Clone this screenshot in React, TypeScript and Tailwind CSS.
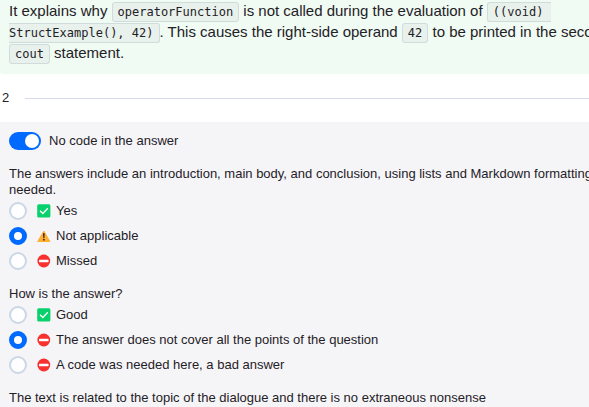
import type { ReactNode } from 'react'

type Mark = 'yes' | 'warning' | 'no'

interface Option {
  label: string
  mark: Mark
}

interface QuestionProps {
  name: string
  title: ReactNode
  options: Option[]
  selected: number
}

function MarkIcon({ mark }: { mark: Mark }) {
  if (mark === 'yes') {
    return (
      <svg width="14" height="14" viewBox="0 0 14 14" className="shrink-0" aria-hidden="true">
        <rect x="0.2" y="0.3" width="13.2" height="13.2" rx="1.5" fill="#08d16c" />
        <path d="M3 6.8 5.8 9.5 10.8 4.2" fill="none" stroke="#fff" strokeWidth="1.3" />
      </svg>
    )
  }
  if (mark === 'warning') {
    return (
      <svg width="14" height="14" viewBox="0 0 14 14" className="shrink-0" aria-hidden="true">
        <path d="M6.8 2 12.9 12.5H.7Z" fill="#ffb02e" stroke="#ffb02e" strokeWidth="1" strokeLinejoin="round" />
        <path d="M6 4.2h1.7l-.3 4.7H6.3Z" fill="#321b41" />
        <circle cx="6.85" cy="10.7" r="0.9" fill="#321b41" />
      </svg>
    )
  }
  return (
    <svg width="14" height="14" viewBox="0 0 14 14" className="shrink-0" aria-hidden="true">
      <circle cx="6.8" cy="7" r="6.4" fill="#f8312f" />
      <rect x="2" y="5.8" width="9.6" height="2.4" rx="0.6" fill="#fff" />
    </svg>
  )
}

function Code({ children }: { children: ReactNode }) {
  return (
    <code className="rounded-[3px] border border-[#cfdcdb] bg-[#e8f1ec] px-[5px] py-[2px] font-['DejaVu_Sans_Mono',monospace] text-[12px] leading-none">
      {children}
    </code>
  )
}

function Question({ name, title, options, selected }: QuestionProps) {
  return (
    <fieldset>
      <legend className="mb-1 whitespace-nowrap">{title}</legend>
      <div className="flex flex-col gap-[7px]">
        {options.map((option, i) => (
          <label key={option.label} className="flex h-[18px] items-center whitespace-nowrap">
            <input
              type="radio"
              name={name}
              defaultChecked={i === selected}
              className="mr-[10px] size-[18px] shrink-0 appearance-none rounded-full border-2 border-[#cbd6e6] bg-white checked:border-[5px] checked:border-[#0069ff]"
            />
            <MarkIcon mark={option.mark} />
            <span className="ml-[5px]">{option.label}</span>
          </label>
        ))}
      </div>
    </fieldset>
  )
}

export default function App() {
  return (
    <main className="min-h-screen overflow-hidden bg-white font-['Liberation_Sans',sans-serif] text-[13px] leading-[16px] text-[#1f2126]">
      <p className="whitespace-nowrap rounded-bl-[3px] bg-[#effbf3] px-[9px] pb-[11px] text-[15px] leading-[21px]">
        It explains why <Code>operatorFunction</Code> is not called during the evaluation of{' '}
        <Code>
          ((void)&nbsp;
          <br />
          StructExample(), 42)
        </Code>
        . This causes the right-side operand <Code>42</Code> to be printed in the second
        <br />
        <Code>cout</Code> statement.
      </p>

      <div className="flex h-12 items-center gap-4 pl-[2px]">
        <span>2</span>
        <hr className="flex-1 border-[#d5d9e9]" />
      </div>

      <section className="flex flex-col gap-4 bg-[#f5f5f8] px-[9px] py-[10px]">
        <label className="flex items-center gap-2">
          <input
            type="checkbox"
            role="switch"
            defaultChecked
            className="flex h-[18px] w-8 appearance-none items-center rounded-full bg-[#cbd6e6] px-[2px] before:size-[14px] before:rounded-full before:bg-white checked:justify-end checked:bg-[#0069ff]"
          />
          No code in the answer
        </label>

        <Question
          name="structure"
          title={
            <>
              The answers include an introduction, main body, and conclusion, using lists and Markdown formatting as
              <br />
              needed.
            </>
          }
          options={[
            { label: 'Yes', mark: 'yes' },
            { label: 'Not applicable', mark: 'warning' },
            { label: 'Missed', mark: 'no' },
          ]}
          selected={1}
        />

        <Question
          name="quality"
          title="How is the answer?"
          options={[
            { label: 'Good', mark: 'yes' },
            { label: 'The answer does not cover all the points of the question', mark: 'no' },
            { label: 'A code was needed here, a bad answer', mark: 'no' },
          ]}
          selected={1}
        />

        <p className="whitespace-nowrap">The text is related to the topic of the dialogue and there is no extraneous nonsense</p>
      </section>
    </main>
  )
}
